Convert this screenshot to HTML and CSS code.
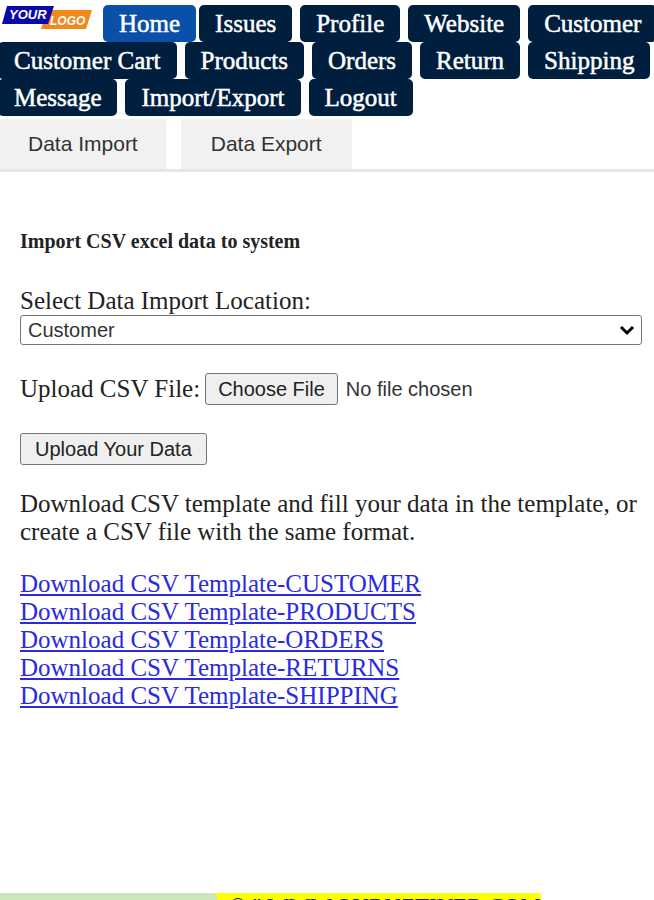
FILE: index.html
```
<!DOCTYPE html>
<html lang="en">
<head>
    <meta charset="UTF-8">
    <meta name="viewport" content="width=device-width, initial-scale=1.0">
    <title>Data Import</title>
    <link rel="stylesheet" href="styles.css">
</head>
<body>

    <nav class="navbar">
        <a href="#" class="logo" aria-label="Your Logo">
            <svg width="97" height="36" viewBox="-2 0 97 36">
                <polygon points="47,10 92,10 86,29 41,29" fill="#f08a1c"/>
                <polygon points="7,6 54,6 48,24 2,24" fill="#0a0aa8"/>
                <text x="9" y="19" class="logo-text">YOUR</text>
                <text x="50" y="25" class="logo-text">LOGO</text>
            </svg>
        </a>
        <a href="#" class="nav-link active">Home</a>
        <a href="#" class="nav-link">Issues</a>
        <a href="#" class="nav-link">Profile</a>
        <a href="#" class="nav-link">Website</a>
        <a href="#" class="nav-link">Customer</a>
        <a href="#" class="nav-link">Customer Cart</a>
        <a href="#" class="nav-link">Products</a>
        <a href="#" class="nav-link">Orders</a>
        <a href="#" class="nav-link">Return</a>
        <a href="#" class="nav-link">Shipping</a>
        <a href="#" class="nav-link">Message</a>
        <a href="#" class="nav-link">Import/Export</a>
        <a href="#" class="nav-link">Logout</a>
    </nav>

    <div class="tabs">
        <button type="button" class="tab">Data Import</button>
        <button type="button" class="tab">Data Export</button>
    </div>

    <main class="content">
        <h5>Import CSV excel data to system</h5>

        <form class="import-form">
            <div>
                <label for="location">Select Data Import Location:</label>
                <div class="select-wrap">
                    <select id="location">
                        <option>Customer</option>
                        <option>Products</option>
                        <option>Orders</option>
                        <option>Returns</option>
                        <option>Shipping</option>
                    </select>
                    <svg class="arrow" width="16" height="11" viewBox="0 0 16 11">
                        <path d="M2 2 L8 8 L14 2" fill="none" stroke="#000" stroke-width="3"/>
                    </svg>
                </div>
            </div>
            <div class="file-row">
                <label for="csv">Upload CSV File:</label>
                <input type="file" id="csv" accept=".csv">
            </div>
            <button type="submit" class="upload">Upload Your Data</button>
        </form>

        <p>Download CSV template and fill your data in the template, or create a CSV file with the same format.</p>

        <div class="templates">
            <a href="#">Download CSV Template-CUSTOMER</a>
            <a href="#">Download CSV Template-PRODUCTS</a>
            <a href="#">Download CSV Template-ORDERS</a>
            <a href="#">Download CSV Template-RETURNS</a>
            <a href="#">Download CSV Template-SHIPPING</a>
        </div>
    </main>

    <footer>
        <div class="status"></div>
        <span class="copyright">© " WWW.OURNZTIVER.COM</span>
    </footer>

</body>
</html>
```

FILE: styles.css
```
body {
    font-family: "Liberation Serif", "Times New Roman", serif;
    font-size: 25px;
    line-height: 28px;
    margin: 0;
    color: #222;
    background-color: #fff;
    overflow-x: hidden;
}
.navbar {
    display: flex;
    flex-wrap: wrap;
    column-gap: 8px;
    padding-top: 5px;
    margin: 0 -6px 0 -2px;
}
.logo {
    height: 36px;
    margin-top: -5px;
}
.logo svg {
    display: block;
}
.logo-text {
    font: italic bold 13px "Liberation Sans", Arial, sans-serif;
    fill: #fff;
}
.logo-text + .logo-text {
    font-size: 12px;
}
.nav-link {
    height: 37px;
    line-height: 37px;
    padding: 0 16px;
    border-radius: 5px;
    background-color: #001f3f;
    color: #fff;
    text-decoration: none;
    -webkit-text-stroke: 0.5px #fff;
}
.nav-link.active {
    background-color: #0a4fa8;
    margin-right: -5px;
}
.tabs {
    display: flex;
    gap: 15px;
    padding-top: 3px;
    border-bottom: 3px solid #e6e6e6;
}
.tab {
    height: 50px;
    padding: 0 30px;
    border: none;
    background-color: #f1f1f1;
    color: #333;
    font: 21px "Liberation Sans", Arial, sans-serif;
}
.tab:first-child {
    padding: 0 28px;
}
.content {
    padding: 58px 12px 183px 20px;
}
h5 {
    margin: 0 0 34px;
    font-size: 20px;
    line-height: 23px;
}
.import-form {
    display: flex;
    flex-direction: column;
    align-items: flex-start;
    gap: 28px;
}
.import-form > div {
    width: 100%;
}
label {
    display: block;
}
.select-wrap {
    position: relative;
}
select {
    appearance: none;
    display: block;
    width: 100%;
    height: 30px;
    padding: 0 7px;
    border: 1px solid #767676;
    border-radius: 3px;
    background-color: #fff;
    color: #333;
    font: 20px "Liberation Sans", Arial, sans-serif;
}
.arrow {
    position: absolute;
    right: 7px;
    top: 10px;
    pointer-events: none;
}
.file-row {
    display: flex;
    align-items: center;
    gap: 5px;
}
input[type="file"] {
    flex: 1;
    color: #333;
    font: 20px "Liberation Sans", Arial, sans-serif;
}
input[type="file"]::file-selector-button,
.upload {
    height: 32px;
    padding: 0 12px;
    border: 1px solid #767676;
    border-radius: 3px;
    background-color: #efefef;
    color: #222;
    font: 20px "Liberation Sans", Arial, sans-serif;
}
input[type="file"]::file-selector-button {
    margin-right: 8px;
}
.upload {
    padding: 0 14px;
}
p {
    margin: 25px 0 24px;
}
.templates {
    display: flex;
    flex-direction: column;
    align-items: flex-start;
}
.templates a {
    color: #2a2ae0;
}
footer {
    display: flex;
    background: linear-gradient(#ff0, #ff0) no-repeat 210px 0 / 10px 100%;
}
.status {
    width: 217px;
    height: 28px;
    border-top-right-radius: 5px;
    background-color: #cbe6bd;
}
.copyright {
    padding-left: 12px;
    font-size: 23px;
    background-color: #ff0;
}
```
